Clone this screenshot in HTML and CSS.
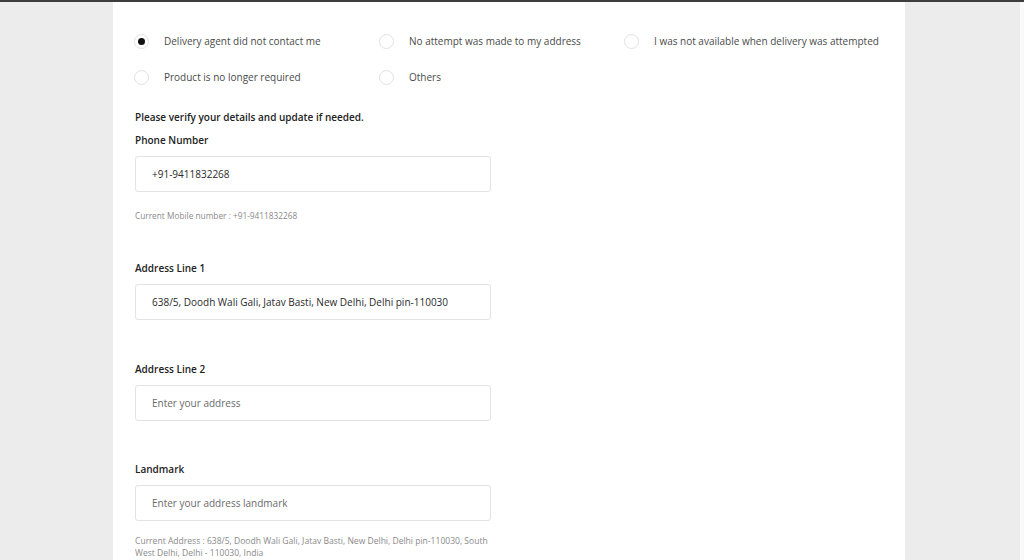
FILE: index.html
```html
<!DOCTYPE html>
<html>
<head>
<meta charset="utf-8">
<link rel="stylesheet" href="styles.css">
</head>
<body>
<div class="topbar"></div>
<div class="page">
  <div class="panel">
    <div class="reasons">
      <label class="reason"><span class="radio checked"></span><span>Delivery agent did not contact me</span></label>
      <label class="reason"><span class="radio"></span><span>No attempt was made to my address</span></label>
      <label class="reason"><span class="radio"></span><span>I was not available when delivery was attempted</span></label>
      <label class="reason"><span class="radio"></span><span>Product is no longer required</span></label>
      <label class="reason"><span class="radio"></span><span>Others</span></label>
    </div>
    <div class="form">
      <p class="intro">Please verify your details and update if needed.</p>
      <div class="field phone">
        <div class="label">Phone Number</div>
        <div class="input">+91-9411832268</div>
        <div class="help">Current Mobile number : +91-9411832268</div>
      </div>
      <div class="field addr1">
        <div class="label">Address Line 1</div>
        <div class="input">638/5, Doodh Wali Gali, Jatav Basti, New Delhi, Delhi pin-110030</div>
      </div>
      <div class="field addr2">
        <div class="label">Address Line 2</div>
        <div class="input placeholder">Enter your address</div>
      </div>
      <div class="field">
        <div class="label">Landmark</div>
        <div class="input placeholder">Enter your address landmark</div>
        <div class="help wide">Current Address : 638/5, Doodh Wali Gali, Jatav Basti, New Delhi, Delhi pin-110030, South West Delhi, Delhi - 110030, India</div>
      </div>
    </div>
  </div>
  <div class="edge"></div>
</div>
</body>
</html>
```
FILE: styles.css
```css
html, body {
  margin: 0;
  padding: 0;
  height: 100%;
  overflow: hidden;
}
body {
  background: #ececec;
  font-family: "Open Sans", "Liberation Sans", sans-serif;
  color: #444;
}
.topbar {
  height: 2px;
  background: #3d3d3d;
}
.page {
  display: flex;
  height: 558px;
}
.panel {
  margin-left: 113px;
  width: 792px;
  background: #fff;
  padding: 30px 0 0 21px;
  box-sizing: border-box;
}
.edge {
  margin-left: auto;
  width: 4px;
  background: #fafafa;
}
.reasons {
  display: grid;
  grid-template-columns: 245px 245px 260px;
  row-gap: 18px;
}
.reason {
  display: flex;
  align-items: center;
  gap: 15px;
  font-size: 10px;
  color: #4a4a4a;
  height: 18px;
  white-space: nowrap;
}
.radio {
  width: 15px;
  height: 15px;
  border: 1px solid #e2e2e2;
  border-radius: 50%;
  box-sizing: border-box;
  flex: none;
  display: flex;
  align-items: center;
  justify-content: center;
}
.radio.checked::after {
  content: "";
  width: 7px;
  height: 7px;
  border-radius: 50%;
  background: #111;
}
.form {
  margin-top: 24px;
  margin-left: 1px;
  width: 356px;
}
.intro {
  margin: 0 0 9px;
  font-size: 10px;
  font-weight: 600;
  color: #222;
  line-height: 14px;
}
.label {
  font-size: 10px;
  font-weight: 600;
  color: #222;
  line-height: 14px;
  margin-bottom: 9px;
}
.input {
  height: 36px;
  border: 1px solid #e3e3e3;
  border-radius: 3px;
  box-sizing: border-box;
  padding-left: 16px;
  display: flex;
  align-items: center;
  font-size: 10px;
  color: #2a2a2a;
}
.input.placeholder {
  color: #6a6a6a;
}
.field {
  margin-bottom: 42px;
}
.field.phone {
  margin-bottom: 39px;
}
.field.addr1 {
  margin-bottom: 42px;
}
.field.addr2 {
  margin-bottom: 41px;
}
.help {
  margin-top: 18px;
  font-size: 8.3px;
  color: #8a8a8a;
  line-height: 12px;
}
.help.wide {
  margin-top: 14px;
  font-size: 8.55px;
}
```
